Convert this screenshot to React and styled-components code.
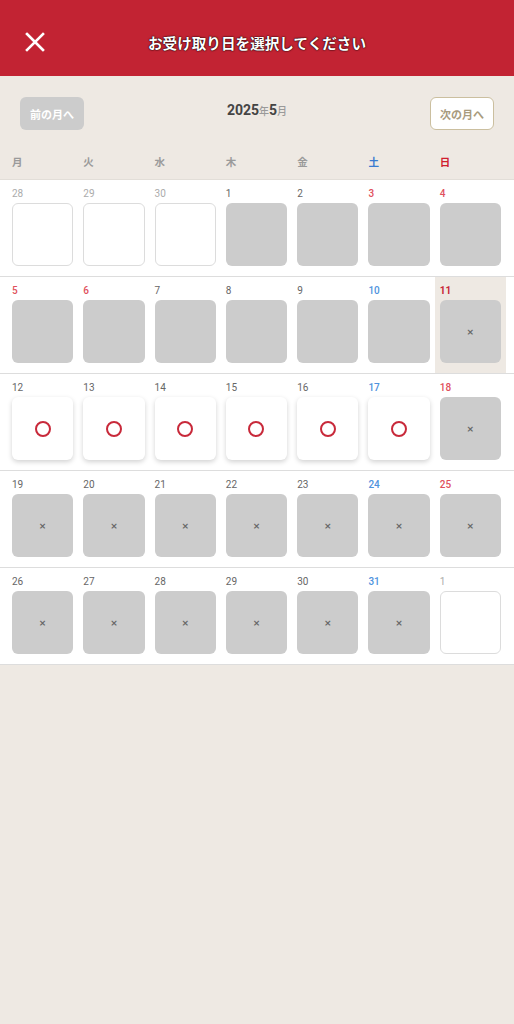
import * as React from 'react';
import styled, { createGlobalStyle } from 'styled-components';

const GlobalStyle = createGlobalStyle`
  html, body {
    margin: 0;
    padding: 0;
    background: #EEE9E3;
    font-family: Roboto, "Noto Sans CJK JP", sans-serif;
  }
`;

const Page = styled.div`
  width: 514px;
  min-height: 1024px;
  background: #EEE9E3;
`;

const Header = styled.header`
  height: 76px;
  background: #C22333;
  display: flex;
  align-items: center;
  justify-content: center;
  position: relative;
`;

const CloseBtn = styled.button`
  position: absolute;
  left: 24px;
  top: 31px;
  width: 22px;
  height: 22px;
  padding: 0;
  border: none;
  background: none;
  cursor: pointer;
`;

const Title = styled.h1`
  margin: 0;
  padding-top: 8px;
  color: #fff;
  font-family: "Noto Sans CJK JP", sans-serif;
  font-weight: 700;
  font-size: 14.6px;
  text-shadow: 0 0 2px rgba(0, 0, 0, 0.9), 0 0 1px #000;
`;

const MonthBar = styled.div`
  display: flex;
  justify-content: space-between;
  align-items: center;
  padding: 21px 20px 0 20px;
  height: 33px;
`;

const NavBtn = styled.button`
  width: 64px;
  height: 33px;
  box-sizing: border-box;
  border-radius: 6px;
  font-family: "Noto Sans CJK JP", sans-serif;
  font-weight: 700;
  font-size: 11px;
  padding: 0;
  cursor: pointer;
  background: ${p => (p.$disabled ? '#CCCCCC' : '#fff')};
  color: ${p => (p.$disabled ? '#fff' : '#A89B7E')};
  border: ${p => (p.$disabled ? 'none' : '1.5px solid #CBBF9F')};
`;

const MonthTitle = styled.div`
  display: flex;
  align-items: baseline;
  color: #444;
  font-weight: 700;
  margin-top: -8px;
`;

const Num = styled.span`
  font-family: Roboto, sans-serif;
  font-size: 14px;
`;

const Unit = styled.span`
  font-family: "Noto Sans CJK JP", sans-serif;
  font-size: 10px;
  color: #9A9A9A;
  font-weight: 500;
`;

const WeekHeader = styled.div`
  display: grid;
  grid-template-columns: repeat(7, 1fr);
  padding: 0 8px 0 7px;
  height: 34px;
  margin-top: 15px;
  align-items: center;
  border-bottom: 1px solid #E2DED8;
`;

const WeekLabel = styled.div`
  padding-left: 5px;
  font-family: "Noto Sans CJK JP", sans-serif;
  font-size: 10.5px;
  font-weight: 700;
  color: ${p => p.$color};
  margin-top: -2px;
`;

const Calendar = styled.div`
  background: #fff;
`;

const WeekRow = styled.div`
  display: grid;
  grid-template-columns: repeat(7, 1fr);
  padding: 0 8px 0 7px;
  border-bottom: 1px solid #DDDDDD;
`;

const DayCell = styled.div`
  padding: 7px 5px 10px 5px;
  display: flex;
  flex-direction: column;
  gap: 3px;
  background: ${p => (p.$today ? '#EEE9E3' : 'transparent')};
`;

const DayNum = styled.span`
  font-family: Roboto, sans-serif;
  font-size: 10px;
  line-height: 13px;
  height: 13px;
  color: ${p => p.$color};
  font-weight: ${p => p.$weight};
`;

const Slot = styled.div`
  height: 63px;
  box-sizing: border-box;
  border-radius: 6px;
  display: flex;
  align-items: center;
  justify-content: center;
  background: ${p => (p.$kind === 'closed' || p.$kind === 'full' ? '#CCCCCC' : '#fff')};
  border: ${p => (p.$kind === 'empty' ? '1px solid #DCDCDC' : 'none')};
  box-shadow: ${p => (p.$kind === 'open' ? '0 2px 5px rgba(0,0,0,0.18)' : 'none')};
`;

const Cross = styled.span`
  font-family: "DejaVu Sans", sans-serif;
  font-size: 9px;
  color: #666;
  font-weight: 700;
`;

const Ring = styled.span`
  width: 12px;
  height: 12px;
  border-radius: 50%;
  border: 2.6px solid #C8293A;
`;

const colorFor = (d) => {
  if (d.other) return '#ABABAB';
  if (d.today) return '#C8293A';
  if (d.sun) return '#E0505C';
  if (d.sat) return '#4F93DD';
  return '#666';
};

const weeks = [
  [
    { n: 28, other: true, kind: 'empty' },
    { n: 29, other: true, kind: 'empty' },
    { n: 30, other: true, kind: 'empty' },
    { n: 1, kind: 'closed' },
    { n: 2, kind: 'closed' },
    { n: 3, sun: true, kind: 'closed' },
    { n: 4, sun: true, kind: 'closed' },
  ],
  [
    { n: 5, sun: true, kind: 'closed' },
    { n: 6, sun: true, kind: 'closed' },
    { n: 7, kind: 'closed' },
    { n: 8, kind: 'closed' },
    { n: 9, kind: 'closed' },
    { n: 10, sat: true, kind: 'closed' },
    { n: 11, sun: true, today: true, kind: 'full' },
  ],
  [
    { n: 12, kind: 'open' },
    { n: 13, kind: 'open' },
    { n: 14, kind: 'open' },
    { n: 15, kind: 'open' },
    { n: 16, kind: 'open' },
    { n: 17, sat: true, kind: 'open' },
    { n: 18, sun: true, kind: 'full' },
  ],
  [
    { n: 19, kind: 'full' },
    { n: 20, kind: 'full' },
    { n: 21, kind: 'full' },
    { n: 22, kind: 'full' },
    { n: 23, kind: 'full' },
    { n: 24, sat: true, kind: 'full' },
    { n: 25, sun: true, kind: 'full' },
  ],
  [
    { n: 26, kind: 'full' },
    { n: 27, kind: 'full' },
    { n: 28, kind: 'full' },
    { n: 29, kind: 'full' },
    { n: 30, kind: 'full' },
    { n: 31, sat: true, kind: 'full' },
    { n: 1, other: true, kind: 'empty' },
  ],
];

const labels = [
  ['月', '#9A9A9A'],
  ['火', '#9A9A9A'],
  ['水', '#9A9A9A'],
  ['木', '#9A9A9A'],
  ['金', '#9A9A9A'],
  ['土', '#3A7BD0'],
  ['日', '#D0202E'],
];

const App = () => {
  return (
    <Page>
      <GlobalStyle />
      <Header>
        <CloseBtn aria-label="close">
          <svg width="22" height="22" viewBox="0 0 22 22">
            <path d="M3 3 L19 19 M19 3 L3 19" stroke="#fff" strokeWidth="2.6" strokeLinecap="square" />
          </svg>
        </CloseBtn>
        <Title>お受け取り日を選択してください</Title>
      </Header>
      <MonthBar>
        <NavBtn $disabled>前の月へ</NavBtn>
        <MonthTitle>
          <Num>2025</Num>
          <Unit>年</Unit>
          <Num>5</Num>
          <Unit>月</Unit>
        </MonthTitle>
        <NavBtn>次の月へ</NavBtn>
      </MonthBar>
      <WeekHeader>
        {labels.map(([t, c]) => (
          <WeekLabel key={t} $color={c}>{t}</WeekLabel>
        ))}
      </WeekHeader>
      <Calendar>
        {weeks.map((week, i) => (
          <WeekRow key={i}>
            {week.map((d, j) => (
              <DayCell key={j} $today={d.today}>
                <DayNum
                  $color={colorFor(d)}
                  $weight={d.today ? 700 : d.sat || d.sun ? 500 : 400}
                >
                  {d.n}
                </DayNum>
                <Slot $kind={d.kind}>
                  {d.kind === 'full' && <Cross>×</Cross>}
                  {d.kind === 'open' && <Ring />}
                </Slot>
              </DayCell>
            ))}
          </WeekRow>
        ))}
      </Calendar>
    </Page>
  );
};

export default App;
